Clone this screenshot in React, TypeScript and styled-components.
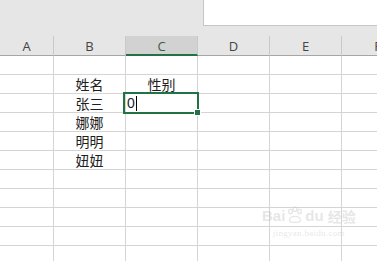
import styled, { createGlobalStyle } from "styled-components";

const GlobalStyle = createGlobalStyle`
  html, body {
    margin: 0;
    padding: 0;
    background: #ffffff;
  }
  body {
    font-family: "Noto Sans CJK SC", "Noto Sans", sans-serif;
  }
`;

const Wrapper = styled.div`
  position: relative;
  width: 377px;
  height: 261px;
  overflow: hidden;
  background: #ffffff;
`;

const TopBar = styled.div`
  height: 36px;
  background: #e6e6e6;
  display: flex;
  justify-content: flex-end;
`;

const NameBox = styled.div`
  width: 174px;
  height: 26px;
  background: #ffffff;
  border-left: 1px solid #c6c6c6;
  border-bottom: 1px solid #c6c6c6;
  box-sizing: border-box;
`;

const Grid = styled.div`
  display: grid;
  grid-template-columns: 54px repeat(5, 72px);
  width: 414px;
`;

const HeadCell = styled.div<{ $active?: boolean }>`
  height: 20px;
  box-sizing: border-box;
  background: ${(p) => (p.$active ? "#d2d2d2" : "#e6e6e6")};
  border-right: 1px solid #c9c9c9;
  border-bottom: ${(p) => (p.$active ? "2px solid #217346" : "1px solid #a6a6a6")};
  display: flex;
  align-items: center;
  justify-content: center;
  font-family: "Open Sans", "Liberation Sans", sans-serif;
  font-size: 13px;
  color: ${(p) => (p.$active ? "#3a5a45" : "#444444")};
  padding-top: 1px;
`;

const Cell = styled.div<{ $selected?: boolean }>`
  position: relative;
  height: 19px;
  box-sizing: border-box;
  border-right: 1px solid #d4d4d4;
  border-bottom: 1px solid #d4d4d4;
  display: flex;
  align-items: center;
  justify-content: center;
  font-size: 14px;
  line-height: 18px;
  color: #1e1e1e;

  ${(p) =>
    p.$selected &&
    `
    justify-content: flex-start;
    &::after {
      content: "";
      position: absolute;
      left: -3px;
      top: -2px;
      right: -2px;
      bottom: -2px;
      border: 2px solid #217346;
      pointer-events: none;
      z-index: 2;
    }
  `}
`;

const Handle = styled.span`
  position: absolute;
  right: -4px;
  bottom: -4px;
  width: 5px;
  height: 5px;
  background: #217346;
  border: 1px solid #ffffff;
  z-index: 3;
`;

const Entry = styled.span`
  font-family: "Liberation Sans", Arial, sans-serif;
  font-size: 14px;
  color: #1e1e1e;
  padding-left: 1px;
  display: flex;
  align-items: center;
`;

const Caret = styled.span`
  display: inline-block;
  width: 1px;
  height: 15px;
  background: #000000;
  margin-left: 1px;
`;

const Watermark = styled.div`
  position: absolute;
  left: 262px;
  top: 206px;
  display: flex;
  flex-direction: column;
  align-items: center;
  color: rgba(200, 200, 200, 0.45);
  pointer-events: none;
`;

const MarkLogo = styled.div`
  display: flex;
  align-items: flex-end;
  gap: 1px;
  font-family: "Liberation Sans", Arial, sans-serif;
  font-weight: bold;
  font-size: 15px;
  line-height: 16px;
`;

const MarkCn = styled.span`
  font-family: "Noto Sans CJK SC", sans-serif;
  font-size: 14px;
  margin-left: 3px;
`;

const MarkUrl = styled.div`
  font-family: "Liberation Serif", serif;
  font-size: 9px;
  margin-top: 4px;
  letter-spacing: 0.3px;
`;

const cols = ["A", "B", "C", "D", "E", "F"];
const data: Record<number, string[]> = {
  1: ["", "姓名", "性别", "", "", ""],
  2: ["", "张三", "", "", "", ""],
  3: ["", "娜娜", "", "", "", ""],
  4: ["", "明明", "", "", "", ""],
  5: ["", "妞妞", "", "", "", ""],
};

const App = () => {
  const rows = Array.from({ length: 11 }, (_, i) => i);

  return (
    <Wrapper>
      <GlobalStyle />
      <TopBar>
        <NameBox />
      </TopBar>
      <Grid>
        {cols.map((c) => (
          <HeadCell key={c} $active={c === "C"}>
            {c}
          </HeadCell>
        ))}
        {rows.map((r) =>
          cols.map((c, ci) => {
            const selected = r === 2 && c === "C";
            return (
              <Cell key={`${r}-${c}`} $selected={selected}>
                {selected ? (
                  <>
                    <Entry>
                      0<Caret />
                    </Entry>
                    <Handle />
                  </>
                ) : (
                  data[r]?.[ci] ?? ""
                )}
              </Cell>
            );
          })
        )}
      </Grid>
      <Watermark>
        <MarkLogo>
          <span>Bai</span>
          <svg width="18" height="18" viewBox="0 0 20 20">
            <g fill="none" stroke="currentColor" strokeWidth="1.4">
              <ellipse cx="5" cy="6" rx="2" ry="2.6" />
              <ellipse cx="10" cy="3.5" rx="2" ry="2.6" />
              <ellipse cx="15" cy="6" rx="2" ry="2.6" />
              <path d="M4 16 C4 10 16 10 16 16 C16 19 4 19 4 16 Z" />
            </g>
          </svg>
          <span>du</span>
          <MarkCn>经验</MarkCn>
        </MarkLogo>
        <MarkUrl>jingyan.baidu.com</MarkUrl>
      </Watermark>
    </Wrapper>
  );
};

export default App;
